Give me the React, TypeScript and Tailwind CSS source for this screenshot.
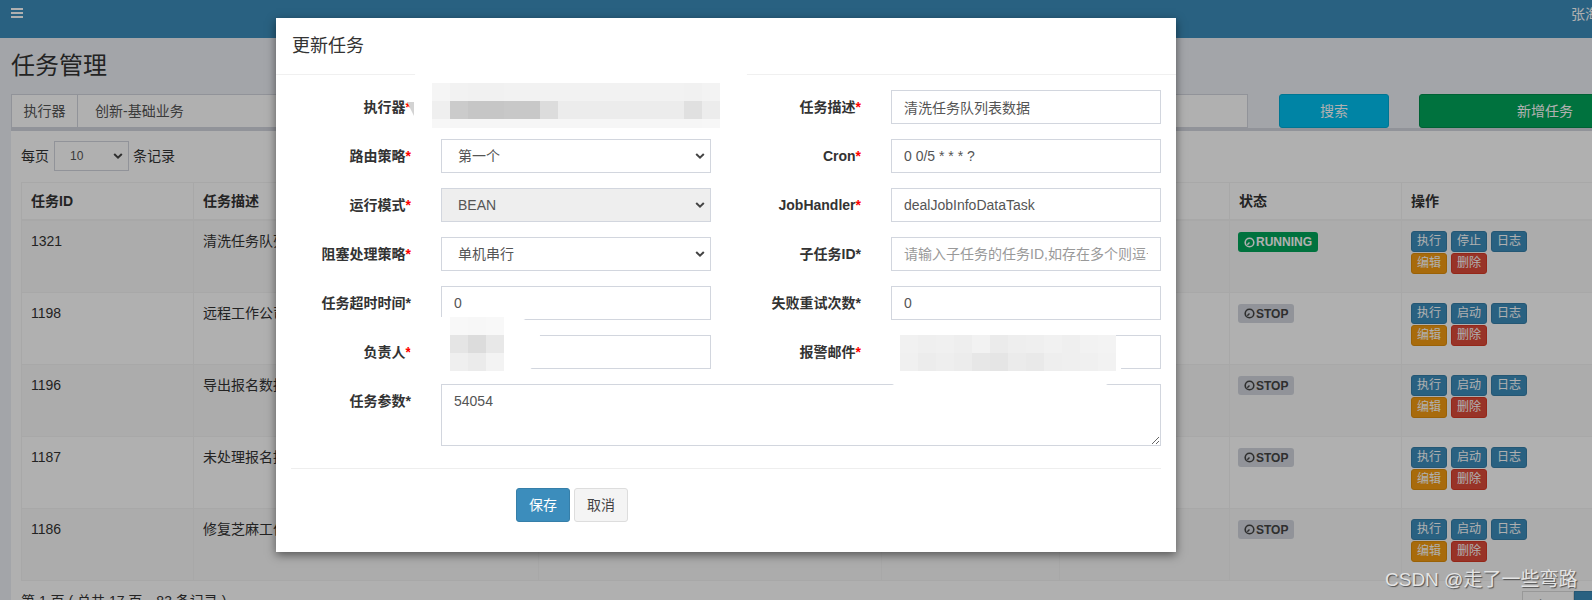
import React from 'react'
import clsx from 'clsx'

type Job = {
  id: string
  desc: string
  handler: string
  cron: string
  owner: string
  running: boolean
}

const jobs: Job[] = [
  { id: '1321', desc: '清洗任务队列表数据', handler: 'BEAN：dealJobInfoDataTask', cron: '0 0/5 * * * ?', owner: '张海涛', running: true },
  { id: '1198', desc: '远程工作公司数据同步', handler: 'BEAN：syncRemoteCompany', cron: '0 0 2 * * ?', owner: '张海涛', running: false },
  { id: '1196', desc: '导出报名数据', handler: 'BEAN：exportSignUpData', cron: '0 30 1 * * ?', owner: '张海涛', running: false },
  { id: '1187', desc: '未处理报名提醒', handler: 'BEAN：signUpRemindTask', cron: '0 0 9 * * ?', owner: '张海涛', running: false },
  { id: '1186', desc: '修复芝麻工作数据', handler: 'BEAN：repairZhimaJob', cron: '0 0 3 * * ?', owner: '张海涛', running: false },
]

const cols = ['w-[172px]', 'w-[345px]', 'w-[343px]', 'w-[178px]', 'w-[170px]', 'w-[172px]', 'w-[200px]']

// mosaic cells over the blurred fields
const mosaicA = [
  ['#f5f5f5', '#f2f2f2', '#f1f1f1', '#f1f1f1', '#f2f2f2', '#f2f2f2', '#f2f2f2', '#f2f2f2', '#f2f2f2', '#f2f2f2', '#f2f2f2', '#f2f2f2', '#f2f2f2', '#f2f2f2', '#f1f1f1', '#f3f3f3'],
  ['#efefef', '#cbcbcb', '#c6c6c6', '#c6c6c6', '#c8c8c8', '#c8c8c8', '#dcdcdc', '#ececec', '#ececec', '#ececec', '#ececec', '#ececec', '#ececec', '#ececec', '#e0e0e0', '#ececec'],
  ['#f7f7f7', '#f6f6f6', '#f6f6f6', '#f6f6f6', '#f6f6f6', '#f6f6f6', '#f6f6f6', '#f6f6f6', '#f6f6f6', '#f6f6f6', '#f6f6f6', '#f6f6f6', '#f6f6f6', '#f6f6f6', '#f6f6f6', '#f7f7f7'],
]
const mosaicB = [
  ['#f8f8f8', '#f7f7f7', '#f8f8f8'],
  ['#e5e5e5', '#dcdcdc', '#e8e8e8'],
  ['#efefef', '#ebebeb', '#f3f3f3'],
]
const mosaicC = [
  ['#f1f1f1', '#efefef', '#f0f0f0', '#eeeeee', '#f2f2f2', '#ebebeb', '#eeeeee', '#efefef', '#f1f1f1', '#efefef', '#f2f2f2', '#f3f3f3'],
  ['#f0f0f0', '#ececec', '#eeeeee', '#ececec', '#e7e7e7', '#e5e5e5', '#ebebeb', '#e9e9e9', '#eeeeee', '#efefef', '#f0f0f0', '#f2f2f2'],
]

function Chevron() {
  return (
    <svg width="10" height="7" viewBox="0 0 10 7" className="pointer-events-none absolute right-[6px] top-1/2 -translate-y-1/2">
      <path d="M1.2 1.5L5 5.2L8.8 1.5" fill="none" stroke="#444" strokeWidth="2" />
    </svg>
  )
}

function ClockIcon({ color }: { color: string }) {
  return (
    <svg width="11" height="11" viewBox="0 0 11 11" className="mr-[1px]">
      <circle cx="5.5" cy="5.5" r="4.3" fill="none" stroke={color} strokeWidth="1.6" />
      <path d="M5.5 5.5L3.3 7.8" stroke={color} strokeWidth="1.4" />
    </svg>
  )
}

function Mosaic({ rows, className }: { rows: string[][]; className: string }) {
  return (
    <div className={clsx('absolute flex flex-col', className)}>
      {rows.map((row, i) => (
        <div key={i} className="flex">
          {row.map((c, j) => (
            <div key={j} className="h-[18px] w-[18px]" style={{ background: c }} />
          ))}
        </div>
      ))}
    </div>
  )
}

function Label({ text, red = true }: { text: string; red?: boolean }) {
  return (
    <label className="w-[150px] shrink-0 pr-[15px] pt-[7px] text-right font-bold leading-[20px] text-[#333]">
      {text}
      <span className={red ? 'text-[#ff0000]' : 'text-[#333]'}>*</span>
    </label>
  )
}

function Field({ children }: { children: React.ReactNode }) {
  return <div className="relative w-[300px] shrink-0 px-[15px]">{children}</div>
}

const inputCls =
  'h-[34px] w-full border border-[#d2d6de] bg-white px-[12px] text-[14px] text-[#555] outline-none placeholder:text-[#999]'

function SelectBox({ value, disabled }: { value: string; disabled?: boolean }) {
  return (
    <div className="relative">
      <select
        disabled={disabled}
        defaultValue={value}
        className={clsx(
          'h-[34px] w-full appearance-none border border-[#d2d6de] pl-[16px] text-[14px] text-[#555] outline-none',
          disabled ? 'bg-[#eeeeee]' : 'bg-white'
        )}
      >
        <option>{value}</option>
      </select>
      <Chevron />
    </div>
  )
}

function ActionBtn({ text, tone }: { text: string; tone: 'primary' | 'warning' | 'danger' }) {
  return (
    <button
      className={clsx(
        'h-[21px] w-[36px] rounded-[3px] border text-[12px] leading-[19px] text-white',
        tone === 'primary' && 'border-[#367fa9] bg-[#3c8dbc]',
        tone === 'warning' && 'border-[#e08e0b] bg-[#f39c12]',
        tone === 'danger' && 'border-[#d73925] bg-[#dd4b39]'
      )}
    >
      {text}
    </button>
  )
}

export default function App() {
  return (
    <div className="relative h-[600px] w-[1592px] overflow-hidden bg-[#ecf0f5] font-['Liberation_Sans','Noto_Sans_CJK_SC',sans-serif] text-[14px] leading-[20px] text-[#333]">
      {/* Top bar */}
      <header className="flex h-[38px] items-start justify-between bg-[#3c8dbc] pl-[11px]">
        <svg width="12" height="10" viewBox="0 0 12 10" className="mt-[8px]">
          <rect x="0" y="0" width="12" height="2" fill="#fff" />
          <rect x="0" y="4" width="12" height="2" fill="#fff" />
          <rect x="0" y="8" width="12" height="2" fill="#fff" />
        </svg>
        <span className="mt-[4px] w-[21px] overflow-hidden whitespace-nowrap text-white">张海涛</span>
      </header>

      {/* Page content */}
      <div className="pl-[11px]">
        <h1 className="pt-[15px] text-[24px] font-normal leading-[26px] text-[#333]">任务管理</h1>

        {/* Filter row */}
        <div className="mt-[15px] flex h-[34px]">
          <div className="flex w-[1237px] shrink-0">
            <span className="flex w-[67px] shrink-0 items-center justify-center border border-[#d2d6de] bg-white text-[#555]">执行器</span>
            <div className="flex flex-1 items-center border border-l-0 border-[#d2d6de] bg-white pl-[17px] text-[#555]">创新-基础业务</div>
          </div>
          <button className="ml-[31px] w-[110px] shrink-0 rounded-[3px] border border-[#00acd6] bg-[#00c0ef] text-white">搜索</button>
          <button className="ml-[30px] w-[252px] shrink-0 rounded-[3px] border border-[#008d4c] bg-[#00a65a] text-white">新增任务</button>
        </div>

        {/* Box */}
        <div className="w-[1600px] border-t-[3px] border-[#d2d6de] bg-white p-[10px]">
          <div className="flex h-[30px] items-center">
            <span>每页</span>
            <div className="relative ml-[5px] h-[30px] w-[75px]">
              <select defaultValue="10" className="h-[30px] w-full appearance-none border border-[#d2d6de] bg-white pl-[15px] text-[12px] text-[#555] outline-none">
                <option>10</option>
              </select>
              <Chevron />
            </div>
            <span className="ml-[4px]">条记录</span>
          </div>

          {/* Table */}
          <div className="mt-[11px] w-[1580px] border-l border-t border-[#f4f4f4]">
            <div className="flex h-[38px] border-b-2 border-[#f4f4f4] font-bold">
              {['任务ID', '任务描述', '运行模式', 'Cron', '负责人', '状态', '操作'].map((h, i) => (
                <div key={h} className={clsx(cols[i], 'flex shrink-0 items-center border-r border-[#f4f4f4] px-[9px]')}>
                  {h}
                </div>
              ))}
            </div>
            {jobs.map((job, r) => (
              <div key={job.id} className={clsx('flex h-[72px] border-b border-[#f4f4f4]', r % 2 === 0 && 'bg-[#f9f9f9]')}>
                <div className={clsx(cols[0], 'shrink-0 border-r border-[#f4f4f4] px-[9px] pt-[10px]')}>{job.id}</div>
                <div className={clsx(cols[1], 'shrink-0 border-r border-[#f4f4f4] px-[9px] pt-[10px]')}>{job.desc}</div>
                <div className={clsx(cols[2], 'shrink-0 border-r border-[#f4f4f4] px-[9px] pt-[10px]')}>{job.handler}</div>
                <div className={clsx(cols[3], 'shrink-0 border-r border-[#f4f4f4] px-[9px] pt-[10px]')}>{job.cron}</div>
                <div className={clsx(cols[4], 'shrink-0 border-r border-[#f4f4f4] px-[9px] pt-[10px]')}></div>
                <div className={clsx(cols[5], 'shrink-0 border-r border-[#f4f4f4] px-[8px] pt-[11px]')}>
                  {job.running ? (
                    <span className="inline-flex h-[20px] items-center rounded-[3px] bg-[#00a65a] px-[6px] text-[12px] font-bold text-white">
                      <ClockIcon color="#fff" />
                      RUNNING
                    </span>
                  ) : (
                    <span className="inline-flex h-[19px] items-center rounded-[3px] bg-[#d2d6de] px-[6px] text-[12px] font-bold text-[#444]">
                      <ClockIcon color="#444" />
                      STOP
                    </span>
                  )}
                </div>
                <div className={clsx(cols[6], 'shrink-0 border-r border-[#f4f4f4] px-[9px] pt-[10px]')}>
                  <div className="flex w-[120px] flex-wrap gap-x-[4px] gap-y-[1px]">
                    <ActionBtn text="执行" tone="primary" />
                    <ActionBtn text={job.running ? '停止' : '启动'} tone="primary" />
                    <ActionBtn text="日志" tone="primary" />
                    <ActionBtn text="编辑" tone="warning" />
                    <ActionBtn text="删除" tone="danger" />
                  </div>
                </div>
              </div>
            ))}
          </div>

          <div className="mt-[10px] flex items-start">
            <span>第 1 页 ( 总共 17 页，83 条记录 )</span>
            <div className="ml-auto flex">
              <span className="h-[30px] w-[52px] border border-[#ddd] bg-white text-center leading-[28px] text-[#777]">上页</span>
              <span className="h-[30px] w-[27px] border border-[#367fa9] bg-[#3c8dbc] text-center leading-[28px] text-white">1</span>
            </div>
          </div>
        </div>
      </div>

      {/* Backdrop */}
      <div className="absolute inset-0 bg-black/[0.31]" />

      {/* Modal */}
      <div className="absolute left-[276px] top-[18px] w-[900px] bg-white shadow-[0_3px_9px_rgba(0,0,0,0.5)]">
        <div className="flex h-[57px] items-center border-b border-[#f0f0f0] px-[16px]">
          <h4 className="text-[18px] font-normal text-[#333]">更新任务</h4>
        </div>

        <div className="pt-[15px]">
          <div className="mb-[15px] flex">
            <Label text="执行器" />
            <Field>
              <div className="h-[34px]" />
            </Field>
            <Label text="任务描述" />
            <Field>
              <input className={inputCls} defaultValue="清洗任务队列表数据" />
            </Field>
          </div>

          <div className="mb-[15px] flex">
            <Label text="路由策略" />
            <Field>
              <SelectBox value="第一个" />
            </Field>
            <Label text="Cron" />
            <Field>
              <input className={inputCls} defaultValue="0 0/5 * * * ?" />
            </Field>
          </div>

          <div className="mb-[15px] flex">
            <Label text="运行模式" />
            <Field>
              <SelectBox value="BEAN" disabled />
            </Field>
            <Label text="JobHandler" />
            <Field>
              <input className={inputCls} defaultValue="dealJobInfoDataTask" />
            </Field>
          </div>

          <div className="mb-[15px] flex">
            <Label text="阻塞处理策略" />
            <Field>
              <SelectBox value="单机串行" />
            </Field>
            <Label text="子任务ID" red={false} />
            <Field>
              <input className={inputCls} placeholder="请输入子任务的任务ID,如存在多个则逗号分隔" />
            </Field>
          </div>

          <div className="mb-[15px] flex">
            <Label text="任务超时时间" red={false} />
            <Field>
              <input className={inputCls} defaultValue="0" />
            </Field>
            <Label text="失败重试次数" red={false} />
            <Field>
              <input className={inputCls} defaultValue="0" />
            </Field>
          </div>

          <div className="mb-[15px] flex">
            <Label text="负责人" />
            <Field>
              <input className={inputCls} defaultValue="" />
            </Field>
            <Label text="报警邮件" />
            <Field>
              <input className={inputCls} defaultValue="" />
            </Field>
          </div>

          <div className="flex">
            <Label text="任务参数" red={false} />
            <div className="w-[750px] shrink-0 px-[15px]">
              <textarea
                className="block h-[62px] w-full border border-[#d2d6de] px-[12px] py-[6px] text-[14px] leading-[20px] text-[#555] outline-none"
                defaultValue="54054"
              />
            </div>
          </div>

          <div className="mx-[15px] mt-[22px] border-t border-[#eeeeee]" />

          <div className="flex pb-[30px] pl-[240px] pt-[19px]">
            <button className="h-[34px] w-[54px] rounded-[3px] border border-[#367fa9] bg-[#3c8dbc] text-white">保存</button>
            <button className="ml-[4px] h-[34px] w-[54px] rounded-[3px] border border-[#dddddd] bg-[#f4f4f4] text-[#444]">取消</button>
          </div>
        </div>

        {/* blurred-out fields */}
        <div className="absolute left-[139px] top-[52px] h-[10px] w-[332px] rounded-full bg-white" />
        <Mosaic rows={mosaicA} className="left-[156px] top-[65px] [&>div:last-child>div]:h-[9px]" />
        <svg width="7" height="14" viewBox="0 0 7 14" className="absolute left-[131px] top-[84px]">
          <polygon points="0,0 7,0 7,14" fill="#d3d3d3" />
        </svg>

        <div className="absolute left-[134px] top-[299px] h-[58px] w-[132px] rounded-[29px] bg-white" />
        <Mosaic rows={mosaicB} className="left-[174px] top-[299px]" />

        <div className="absolute left-[601px] top-[307px] h-[63px] w-[246px] rounded-[30px] bg-white" />
        <Mosaic rows={mosaicC} className="left-[624px] top-[317px]" />
      </div>

      {/* watermark */}
      <div className="absolute left-[1385px] top-[568px] whitespace-nowrap text-[19px] leading-[24px] text-[#e4e4e4] [text-shadow:1px_1px_1px_rgba(0,0,0,0.55)]">
        CSDN @走了一些弯路
      </div>
    </div>
  )
}
